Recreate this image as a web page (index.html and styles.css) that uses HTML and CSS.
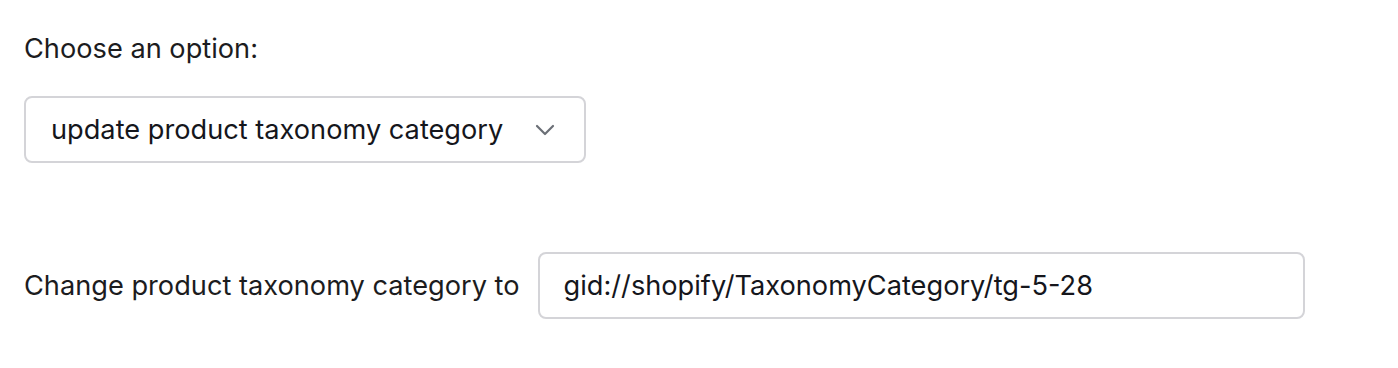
FILE: index.html
```html
<!DOCTYPE html>
<html>
<head>
<meta charset="utf-8">
<link rel="stylesheet" href="styles.css">
</head>
<body>
<div class="page">
  <div class="field">
    <label class="label">Choose an option:</label>
    <div class="select">
      <span class="select-value">update product taxonomy category</span>
      <svg class="chevron" width="20" height="12" viewBox="0 0 20 12"><path d="M2 2 L10 10 L18 2" fill="none" stroke="#6b6f76" stroke-width="2.2" stroke-linecap="round" stroke-linejoin="round"/></svg>
    </div>
  </div>
  <div class="row">
    <span class="label">Change product taxonomy category to</span>
    <div class="input">gid://shopify/TaxonomyCategory/tg-5-28</div>
  </div>
</div>
</body>
</html>
```
FILE: styles.css
```css
html, body {
  margin: 0;
  padding: 0;
  background: #ffffff;
}
body {
  font-family: Inter, "Noto Sans", sans-serif;
  color: #1c1c1e;
}
.page {
  padding: 31px 24px;
  display: flex;
  flex-direction: column;
  gap: 89px;
}
.field {
  display: flex;
  flex-direction: column;
  align-items: flex-start;
  gap: 29px;
}
.label {
  font-size: 27.2px;
  line-height: 36px;
  color: #1c1c1e;
}
.select {
  box-sizing: border-box;
  width: 562px;
  height: 67px;
  border: 2px solid #d4d4d8;
  border-radius: 8px;
  display: flex;
  align-items: center;
  justify-content: space-between;
  padding: 0 29px 0 25px;
}
.select-value, .input {
  font-size: 27.2px;
  color: #15161c;
}
.chevron {
  display: block;
}
.row {
  display: flex;
  align-items: center;
  gap: 18px;
}
.input {
  box-sizing: border-box;
  width: 767px;
  height: 67px;
  border: 2px solid #d4d4d8;
  border-radius: 8px;
  display: flex;
  align-items: center;
  padding: 0 24px;
}
```
